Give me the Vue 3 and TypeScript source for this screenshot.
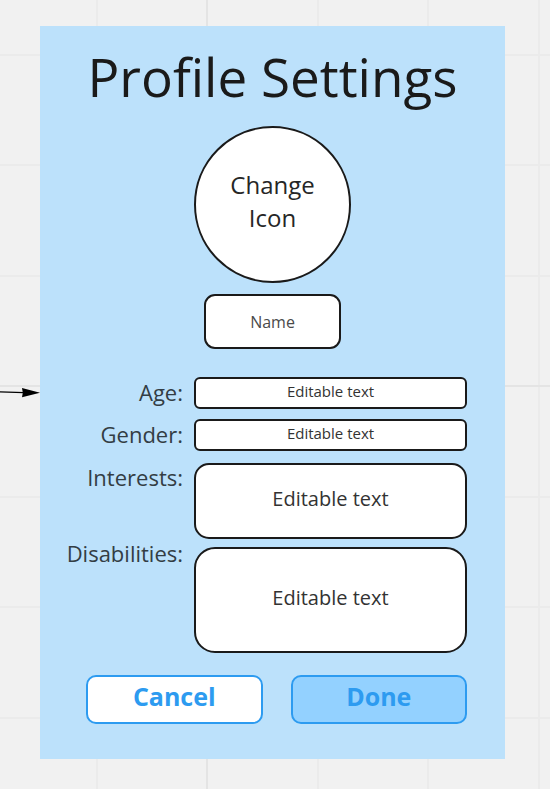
<script setup lang="ts">
import { ref } from 'vue'

interface Field {
  id: string
  label: string
  value: string
}

interface GridLine {
  at: number
  major: boolean
}

const name = ref('Name')

const shortFields = ref<Field[]>([
  { id: 'age', label: 'Age:', value: 'Editable text' },
  { id: 'gender', label: 'Gender:', value: 'Editable text' },
])

const longFields = ref<Field[]>([
  { id: 'interests', label: 'Interests:', value: 'Editable text' },
  { id: 'disabilities', label: 'Disabilities:', value: 'Editable text' },
])

// Canvas grid: a line about every 110px, every fourth one stronger.
function gridLines(origin: number, majorIndex: number): GridLine[] {
  return Array.from({ length: 24 }, (_, i) => ({
    at: Math.floor(origin + i * 110.5),
    major: i % 4 === majorIndex,
  }))
}

const columns = gridLines(97, 1)
const rows = gridLines(55, 3)
</script>

<template>
  <main class="board">
    <svg class="grid" aria-hidden="true">
      <line
        v-for="line in columns"
        :key="'c' + line.at"
        :class="{ major: line.major }"
        :x1="line.at"
        :x2="line.at"
        y1="0"
        y2="100%"
      />
      <line
        v-for="line in rows"
        :key="'r' + line.at"
        :class="{ major: line.major }"
        x1="0"
        x2="100%"
        :y1="line.at"
        :y2="line.at"
      />
    </svg>
    <svg class="arrow" viewBox="0 0 40 12" aria-hidden="true">
      <path d="M0 4.9 24 5.7" stroke="#000" stroke-width="1.2" />
      <path d="M22 1 40 5.7 22 10.3 22.8 5.7Z" fill="#000" />
    </svg>

    <form class="panel" @submit.prevent>
      <header class="head">
        <h1 class="title">Profile Settings</h1>
        <button type="button" class="avatar">Change<br />Icon</button>
        <input v-model="name" class="box name" type="text" aria-label="Name" />
      </header>

      <div class="fields">
        <div class="group short">
          <div v-for="field in shortFields" :key="field.id" class="row">
            <label :for="field.id">{{ field.label }}</label>
            <input :id="field.id" v-model="field.value" class="box" type="text" />
          </div>
        </div>
        <div class="group long">
          <div v-for="field in longFields" :key="field.id" class="row">
            <label :for="field.id">{{ field.label }}</label>
            <textarea :id="field.id" v-model="field.value" class="box" :class="field.id"></textarea>
          </div>
        </div>
      </div>

      <div class="actions">
        <button type="button" class="action">Cancel</button>
        <button type="submit" class="action done">Done</button>
      </div>
    </form>
  </main>
</template>

<style>
body {
  margin: 0;
  background: #f1f1f1;
}
</style>

<style scoped>
.board {
  position: relative;
  box-sizing: border-box;
  min-height: 100vh;
  padding: 26px 45px 30px 40px;
  overflow: hidden;
  color: #1a1a1a;
  font-family: 'Open Sans', 'Noto Sans', sans-serif;
}

.board * {
  box-sizing: border-box;
}

.grid {
  position: absolute;
  inset: 0;
  width: 100%;
  height: 100%;
}

.grid line {
  stroke: #ebebeb;
  stroke-width: 2;
}

.grid line.major {
  stroke: #e4e4e4;
}

.arrow {
  position: absolute;
  top: 387px;
  left: 0;
  width: 40px;
  height: 12px;
}

.panel {
  position: relative;
  padding: 12px 38px 35px 24px;
  background: #bce1fb;
}

.head {
  display: flex;
  flex-direction: column;
  align-items: center;
  padding-left: 14px;
}

.title {
  margin: 0 0 10px;
  font-size: 53px;
  font-weight: 400;
  line-height: 78px;
  white-space: nowrap;
  font-variant-ligatures: none;
}

.avatar {
  width: 157px;
  height: 157px;
  margin: 0 0 11px;
  padding: 0 0 7px;
  border: 2px solid #1a1a1a;
  border-radius: 50%;
  background: #fff;
  color: #262626;
  font: 24px/33px 'Open Sans', 'Noto Sans', sans-serif;
}

.box {
  display: block;
  width: 100%;
  margin: 0;
  border: 2px solid #1a1a1a;
  background: #fff;
  color: #333;
  font-family: inherit;
  text-align: center;
  outline: none;
}

.name {
  width: 137px;
  height: 55px;
  padding: 0;
  border-radius: 11px;
  font-size: 16px;
  color: #4a4a4a;
}

.fields {
  display: grid;
  gap: 12px;
  margin-top: 28px;
}

.group {
  display: grid;
}

.short {
  gap: 10px;
}

.row {
  display: grid;
  grid-template-columns: 119px 1fr;
  column-gap: 11px;
  align-items: start;
}

.row label {
  color: #333d44;
  font-size: 22px;
  line-height: 30px;
  text-align: right;
  white-space: nowrap;
}

.long label {
  line-height: 28px;
}

.short .box {
  height: 32px;
  padding: 0 0 4px;
  border-radius: 6px;
  font-size: 15px;
}

.long .box {
  height: 76px;
  padding: 21px 0 0;
  border-radius: 15px;
  font-size: 20px;
  line-height: 26px;
  resize: none;
  overflow: hidden;
}

.long .disabilities {
  height: 106px;
  margin-top: 8px;
  padding-top: 36px;
  border-radius: 21px;
}

.actions {
  display: grid;
  grid-template-columns: 1fr 1fr;
  gap: 28px;
  margin: 22px 0 0 22px;
}

.action {
  height: 49px;
  padding: 0 0 7px;
  border: 2px solid #2d9bf0;
  border-radius: 10px;
  background: #fff;
  color: #2d9bf0;
  font: 700 25px/34px 'Open Sans', 'Noto Sans', sans-serif;
}

.done {
  background: #93d1ff;
}
</style>
